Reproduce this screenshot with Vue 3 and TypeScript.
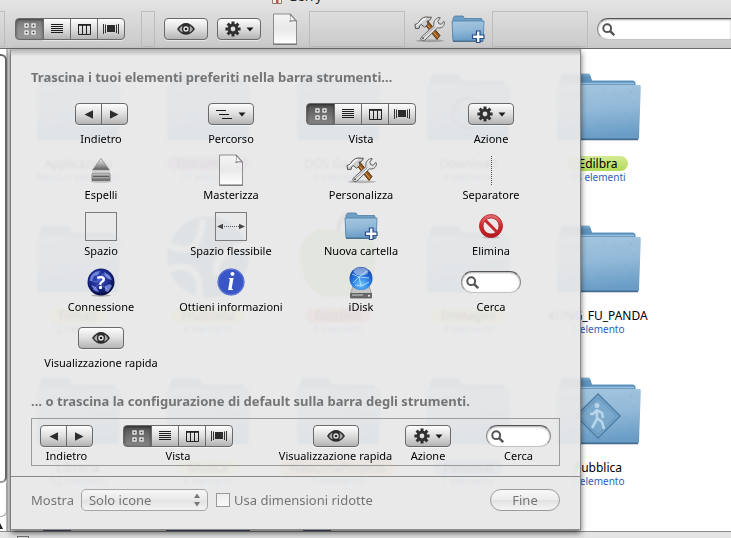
<script setup lang="ts">
import { h, type FunctionalComponent } from 'vue'

type Kind =
  | 'nav' | 'path' | 'view' | 'action' | 'eject' | 'burn' | 'tools' | 'separator'
  | 'space' | 'flex' | 'newfolder' | 'delete' | 'connect' | 'info' | 'idisk' | 'search' | 'look'

interface Item { kind: Kind; label: string }
interface Entry { name: string; info: string; tag?: string; art?: string }

const icon = (name: string, w: number, ht: number) =>
  h('svg', { class: 'ico', width: w, height: ht, 'aria-hidden': 'true' }, [h('use', { href: `#${name}` })])

const btn = (label: string, cls: string, kids: unknown[]) =>
  h('button', { type: 'button', class: ['btn', cls], 'aria-label': label }, kids as never)

/* One toolbar control, drawn the same way in the toolbar, the palette and the default set. */
const Control: FunctionalComponent<{ kind: Kind }> = ({ kind }) => {
  switch (kind) {
    case 'nav':
      return h('span', { class: 'group' }, [
        btn('Indietro', 'half', [icon('i-prev', 9, 9)]),
        btn('Avanti', 'half', [icon('i-next', 9, 9)]),
      ])
    case 'view':
      return h('span', { class: 'group' }, [
        btn('Icone', 'seg on', [icon('i-grid', 12, 12)]),
        btn('Elenco', 'seg', [icon('i-list', 12, 10)]),
        btn('Colonne', 'seg', [icon('i-cols', 13, 11)]),
        btn('Cover Flow', 'seg', [icon('i-flow', 16, 10)]),
      ])
    case 'path': return btn('Percorso', 'wide', [icon('i-path', 17, 11), icon('i-down', 8, 5)])
    case 'action': return btn('Azione', 'wide', [icon('i-gear', 16, 16), icon('i-down', 8, 5)])
    case 'look': return btn('Visualizzazione rapida', 'eye', [icon('i-eye', 18, 12)])
    case 'eject': return icon('i-eject', 22, 26)
    case 'burn': return icon('i-page', 26, 32)
    case 'tools': return icon('i-tools', 31, 28)
    case 'separator': return h('span', { class: 'dots' })
    case 'space': return h('span', { class: 'space' })
    case 'flex': return h('span', { class: 'space' }, [icon('i-flex', 30, 9)])
    case 'newfolder': return icon('i-newfolder', 34, 28)
    case 'delete': return icon('i-delete', 24, 25)
    case 'connect': return icon('i-connect', 28, 29)
    case 'info': return icon('i-info', 28, 28)
    case 'idisk': return icon('i-idisk', 24, 33)
    case 'search':
      return h('span', { class: 'search' }, [
        icon('i-lens', 13, 13),
        h('input', { type: 'search', 'aria-label': 'Cerca' }),
      ])
  }
}
Control.props = ['kind']

const palette: Item[] = [
  { kind: 'nav', label: 'Indietro' },
  { kind: 'path', label: 'Percorso' },
  { kind: 'view', label: 'Vista' },
  { kind: 'action', label: 'Azione' },
  { kind: 'eject', label: 'Espelli' },
  { kind: 'burn', label: 'Masterizza' },
  { kind: 'tools', label: 'Personalizza' },
  { kind: 'separator', label: 'Separatore' },
  { kind: 'space', label: 'Spazio' },
  { kind: 'flex', label: 'Spazio flessibile' },
  { kind: 'newfolder', label: 'Nuova cartella' },
  { kind: 'delete', label: 'Elimina' },
  { kind: 'connect', label: 'Connessione' },
  { kind: 'info', label: 'Ottieni informazioni' },
  { kind: 'idisk', label: 'iDisk' },
  { kind: 'search', label: 'Cerca' },
  { kind: 'look', label: 'Visualizzazione rapida' },
]

const defaults: Item[] = [
  { kind: 'nav', label: 'Indietro' },
  { kind: 'view', label: 'Vista' },
  { kind: 'look', label: 'Visualizzazione rapida' },
  { kind: 'action', label: 'Azione' },
  { kind: 'search', label: 'Cerca' },
]

const entries: Entry[] = [
  { name: 'Applicazioni', info: 'Nessun elemento' },
  { name: 'Documenti', info: '11 elementi', tag: 'purple' },
  { name: 'DOS Games', info: '6 elementi' },
  { name: 'Download', info: '6 elementi', art: 'drop' },
  { name: 'Edilbra', info: '18 elementi', tag: 'green' },
  { name: 'Filmati', info: '12 elementi', tag: 'yellow' },
  { name: 'Frustrella', info: '4 elementi', tag: 'yellow', art: 'globe' },
  { name: 'Giochini', info: '9 elementi', tag: 'red', art: 'apple' },
  { name: 'Immagini', info: '8 elementi', tag: 'yellow' },
  { name: 'KUNG_FU_PANDA', info: '1 elemento' },
  { name: 'Libreria', info: '52 elementi' },
  { name: 'Musica', info: '4 elementi', tag: 'yellow' },
  { name: 'NeoLunaProjects', info: '1 elemento', tag: 'orange' },
  { name: 'Personal', info: '1 elemento', tag: 'blue' },
  { name: 'Pubblica', info: '1 elemento', art: 'walk' },
]
</script>

<template>
  <div class="window">
    <svg class="defs" width="0" height="0" aria-hidden="true">
      <defs>
        <linearGradient id="g-folder" x1="0" y1="0" x2="0.15" y2="1">
          <stop offset="0" stop-color="#a5c6df" /><stop offset="0.5" stop-color="#92b9d8" /><stop offset="1" stop-color="#6a9dc6" />
        </linearGradient>
        <linearGradient id="g-back" x1="0" y1="0" x2="0" y2="1">
          <stop offset="0" stop-color="#86b0d0" /><stop offset="0.2" stop-color="#5f94bf" /><stop offset="1" stop-color="#5c90ba" />
        </linearGradient>
        <linearGradient id="g-page" x1="0" y1="0" x2="0" y2="1">
          <stop offset="0" stop-color="#f4f4f4" /><stop offset="0.5" stop-color="#e9e9e9" /><stop offset="1" stop-color="#fff" />
        </linearGradient>
        <linearGradient id="g-metal" x1="0" y1="0" x2="0" y2="1">
          <stop offset="0" stop-color="#f8f8f8" /><stop offset="1" stop-color="#5a5a5a" />
        </linearGradient>
        <linearGradient id="g-red" x1="0" y1="0" x2="0" y2="1">
          <stop offset="0" stop-color="#e8747a" /><stop offset="0.5" stop-color="#cf2a30" /><stop offset="1" stop-color="#b8161c" />
        </linearGradient>
        <radialGradient id="g-globe" cx="0.5" cy="0.75" r="0.75">
          <stop offset="0" stop-color="#6fc8ff" /><stop offset="0.5" stop-color="#2a7be0" /><stop offset="1" stop-color="#0b3aa4" />
        </radialGradient>
        <radialGradient id="g-night" cx="0.45" cy="0.4" r="0.6">
          <stop offset="0" stop-color="#3c56c8" /><stop offset="0.6" stop-color="#1a2a8c" /><stop offset="1" stop-color="#060a3c" />
        </radialGradient>
      </defs>

      <symbol id="i-prev" viewBox="0 0 9 9"><path d="M9 0.3v8.4L0.5 4.5z" fill="#2c2c2c" /></symbol>
      <symbol id="i-next" viewBox="0 0 9 9"><path d="M0 0.3v8.4l8.5-4.2z" fill="#2c2c2c" /></symbol>
      <symbol id="i-down" viewBox="0 0 8 5"><path d="M0.5 0.5h7L4 4.5z" fill="#1c1c1c" /></symbol>
      <symbol id="i-grid" viewBox="0 0 12 12">
        <g fill="#333" stroke="#fff" stroke-width="1.2">
          <rect x="1" y="1" width="3" height="3" /><rect x="8" y="1" width="3" height="3" />
          <rect x="1" y="8" width="3" height="3" /><rect x="8" y="8" width="3" height="3" />
        </g>
      </symbol>
      <symbol id="i-list" viewBox="0 0 12 10">
        <path d="M0 .5h12M0 2.500h12M0 4.500h12M0 6.500h12M0 8.500h12" stroke="#1e1e1e" stroke-width="1" />
      </symbol>
      <symbol id="i-cols" viewBox="0 0 13 11">
        <path d="M.5 1h12v9.500H.5zM4.500 1v9.500M8.500 1v9.500" fill="none" stroke="#222" />
        <path d="M0 .8h13" stroke="#222" stroke-width="1.6" />
      </symbol>
      <symbol id="i-flow" viewBox="0 0 16 10">
        <rect x="4" y="1" width="8" height="7" fill="#2c2c2c" />
        <path d="M.5 0v10M2.500 .5v8.500M13.500 .5v8.500M15.500 0v10" stroke="#333" />
      </symbol>
      <symbol id="i-path" viewBox="0 0 17 11">
        <path d="M0 1.500h10M3 5.500h10M6 9.500h10" stroke="#1a1a1a" stroke-width="1" />
      </symbol>
      <symbol id="i-eye" viewBox="0 0 18 12">
        <path d="M0 6C3 1.800 6 0 9 0s6 1.800 9 6c-3 4.200-6 5.800-9 5.800S3 10.200 0 6z" fill="#2b2b2b" />
        <path d="M2 6.200C3.400 4 4.600 3 5.600 2.600 4.700 4.600 4.800 7.600 6 9.600 4.400 9 3.200 8 2 6.200zM16 6.200c-1.400-2.200-2.600-3.200-3.600-3.600.9 2 .8 5-.4 7 1.600-.6 2.800-1.600 4-3.400z" fill="#a9a9a9" />
        <circle cx="9" cy="6" r="2.700" fill="#e6e6e6" /><circle cx="9" cy="6" r="1.300" fill="#222" />
      </symbol>
      <symbol id="i-gear" viewBox="0 0 16 16">
        <g stroke="#303030" stroke-width="3" fill="none">
          <path d="M8 .4v3.600M8 12v3.600M.4 8H4M12 8h3.600M2.600 2.600l2.600 2.600M10.800 10.800l2.600 2.600M13.400 2.600l-2.600 2.600M5.200 10.800l-2.600 2.600" />
          <circle cx="8" cy="8" r="3.900" />
        </g>
      </symbol>
      <symbol id="i-lens" viewBox="0 0 13 13">
        <circle cx="5.200" cy="5.200" r="3.900" fill="none" stroke="#555" stroke-width="2" />
        <path d="M8.200 8.200l4 4" stroke="#555" stroke-width="2.400" />
      </symbol>
      <symbol id="i-flex" viewBox="0 0 30 9">
        <path d="M6 4.500h18" stroke="#555" stroke-dasharray="1 1" />
        <path d="M1 4.500l6-2.800v5.600zM29 4.500l-6-2.800v5.600z" fill="#484848" />
      </symbol>
      <symbol id="i-eject" viewBox="0 0 22 26">
        <ellipse cx="11" cy="24.500" rx="10.500" ry="1.300" fill="#000" opacity=".18" />
        <path d="M11 1.500L19.500 13h-17z" fill="url(#g-metal)" stroke="#8a8a8a" stroke-width=".8" />
        <path d="M2 14.500h18V24H2z" fill="#c4c4c4" />
        <path d="M2 17h18v6.500H2z" fill="url(#g-metal)" stroke="#6e6e6e" stroke-width=".8" />
        <path d="M3 18.500h16v1.500H3z" fill="#5d5d5d" />
      </symbol>
      <symbol id="i-page" viewBox="0 0 26 32">
        <path d="M1.500 1h17l6 7v23h-23z" fill="url(#g-page)" stroke="#8d8d8d" />
        <path d="M1 31.300h24" stroke="#666" stroke-width=".9" />
        <path d="M18 1c1 2.500.8 5-.2 7.600 2.300-.9 4.500-1 6.700-.4z" fill="#c9c9c9" stroke="#777" stroke-width=".9" />
        <path d="M18.600 2.800c.3 1.500.2 3-.2 4.400 1.200-.3 2.400-.3 3.600-.2z" fill="#fff" />
      </symbol>
      <symbol id="i-tools" viewBox="0 0 31 28">
        <ellipse cx="16" cy="25.800" rx="14" ry="1.400" fill="#000" opacity=".22" />
        <path d="M9.500 7.500l3-3L26 20.500l-3 4z" fill="#9a5a1e" stroke="#4a2608" stroke-width=".9" />
        <path d="M11.500 8l12.500 14.500" stroke="#d79a50" stroke-width="1" />
        <path d="M1.500 13.500L1 9.500l3.500-1.300C5.500 5 8.500 2.300 12 2l5.500.3-2 3.200-2.500.7 1 3-3.500 3-3.200-2.700-1.800 1.500-.3 2.300z" fill="#cfcfcf" stroke="#444" stroke-width=".9" />
        <path d="M2.500 10.500L7 7c1-2 3-3.500 5-3.700" stroke="#fff" stroke-width="1.200" fill="none" />
        <path d="M7 22.500L20 10.500c-.8-3.500.8-7 5-8l1.300.2-2.500 3.500 1 2.500 2.500.6 2.500-3 .7 1.500c-.3 3.800-3.500 5.800-7 5L11 25c-1.500 1.300-5.500 0-4-2.500z" fill="#e2e2e2" stroke="#555" stroke-width=".9" />
        <path d="M9.500 22.500l12-11" stroke="#999" stroke-width="1" />
        <circle cx="9" cy="23.300" r="1" fill="#555" />
      </symbol>
      <symbol id="i-newfolder" viewBox="0 0 34 28">
        <path d="M2 3.500L3.500 1h8.500l1.500 2.500h17l1 3v17H2z" fill="#6f9fc5" stroke="#4f7ea6" stroke-width=".8" />
        <path d="M1 6h32l-.8 20H2z" fill="url(#g-folder)" stroke="#4f7fa8" stroke-width=".8" />
        <path d="M2 26.300h30" stroke="#3c5f80" />
        <path d="M25.500 16h3.500v4h4v3.500h-4v4h-3.500v-4h-4V20h4z" fill="#fff" stroke="#2b4a8a" stroke-width="1.200" />
      </symbol>
      <symbol id="i-delete" viewBox="0 0 24 25">
        <ellipse cx="12" cy="23.300" rx="9" ry="1.200" fill="#000" opacity=".15" />
        <circle cx="12" cy="12" r="11.500" fill="url(#g-red)" stroke="#a82024" stroke-width=".8" />
        <circle cx="12" cy="12" r="8" fill="#eee6e6" stroke="#a01418" stroke-width=".7" />
        <path d="M6.300 6.300l11.400 11.400" stroke="#c8242a" stroke-width="3" />
      </symbol>
      <symbol id="i-connect" viewBox="0 0 28 29">
        <ellipse cx="14" cy="27.500" rx="10" ry="1.200" fill="#000" opacity=".25" />
        <circle cx="14" cy="14" r="13.500" fill="url(#g-night)" />
        <path d="M4 8c3-4 6-5 9-5l-2 4-4 1-2 5-2-1zM17 4l5 3 3 5-4-1-3-3zM4 17l5 2 3 5-4-1zM18 18l5-2 2 2-4 6-3-1z" fill="#8c9ff0" opacity=".75" />
        <path d="M2 12l8 2 6-8 8 4M6 22l6-6 10 6" stroke="#b6c4ff" stroke-width=".5" fill="none" opacity=".7" />
        <text x="14" y="20.500" text-anchor="middle" font-family="'Noto Sans', sans-serif" font-weight="bold" font-size="18" fill="#fff">?</text>
      </symbol>
      <symbol id="i-info" viewBox="0 0 28 28">
        <circle cx="14" cy="14" r="13.500" fill="#3a55c6" />
        <circle cx="14" cy="14" r="12.800" fill="none" stroke="#6d84df" stroke-width=".8" />
        <text x="14" y="21.500" text-anchor="middle" font-family="'Liberation Serif', serif" font-weight="bold" font-style="italic" font-size="25" fill="#fff">i</text>
      </symbol>
      <symbol id="i-idisk" viewBox="0 0 24 33">
        <path d="M4 20h16l2.500 8h-21z" fill="#c6c6c6" stroke="#8c8c8c" stroke-width=".7" />
        <path d="M1.500 27.500h21v4.500h-21z" fill="#6a6a6a" stroke="#4a4a4a" stroke-width=".7" />
        <path d="M3 29h11" stroke="#ccc" stroke-width="1" /><circle cx="20" cy="29.700" r="1" fill="#eee" />
        <circle cx="12" cy="12.500" r="11.500" fill="url(#g-globe)" />
        <path d="M3 8l7 3 8-6M10 11l2 9 8-4M4 17l6-6 10 1M12 20l-6-1" stroke="#d5efff" stroke-width=".7" fill="none" />
        <ellipse cx="12" cy="5.500" rx="7.500" ry="4" fill="#fff" opacity=".45" />
      </symbol>
      <symbol id="i-folder" viewBox="0 0 86 68">
        <path d="M3 14L6 2.500Q7 .5 9 .5h24q2 0 2.500 2L37 7.500h41q2 0 2.500 2.500V20H3z" fill="url(#g-back)" />
        <path d="M5 10.500h74" stroke="#9cc0dc" stroke-width="1.500" />
        <path d="M1 14q0-2 2-2h81q2 0 1.800 2L84 65q-.2 2-2 2H4q-2 0-2-2z" fill="url(#g-folder)" />
        <path d="M3 66.300h80" stroke="#44698c" stroke-width="1.800" />
        <g fill="#5f8fb8" opacity=".55">
          <circle cx="48" cy="18" r=".6" /><circle cx="61" cy="22" r=".5" /><circle cx="76" cy="19" r=".6" /><circle cx="54" cy="34" r=".5" />
          <circle cx="70" cy="40" r=".6" /><circle cx="77" cy="50" r=".6" /><circle cx="45" cy="52" r=".6" /><circle cx="66" cy="56" r=".5" />
          <circle cx="50" cy="60" r=".6" /><circle cx="79" cy="30" r=".6" />
        </g>
      </symbol>
    </svg>

    <header class="toolbar">
      <div class="title">
        <svg width="12" height="12" viewBox="0 0 12 12" aria-hidden="true">
          <path d="M1.500 5v6.500h9V5L6 1z" fill="#f3ede6" stroke="#8a8078" /><path d="M5 7h2.500v4.500H5z" fill="#b4574c" />
        </svg>
        <span>Gerry</span>
      </div>
      <div class="bar">
        <span class="gap edge"></span>
        <span class="view-slot"><Control kind="view" /></span>
        <span class="gap small"></span>
        <Control kind="look" />
        <Control kind="action" />
        <span class="slot"><Control kind="burn" /></span>
        <span class="gap"></span>
        <span class="slot"><Control kind="tools" /></span>
        <span class="slot"><Control kind="newfolder" /></span>
        <span class="gap"></span>
        <div class="find"><Control kind="search" /></div>
      </div>
    </header>

    <div class="body">
      <aside class="rail">
        <div class="thumb"></div>
        <div class="cap"></div>
        <svg width="6" height="8" viewBox="0 0 6 8" aria-hidden="true"><path d="M0 0l3 6H0z" fill="#222" /></svg>
      </aside>

      <main class="files">
        <ul class="icons">
          <li v-for="e in entries" :key="e.name">
            <svg class="art" width="86" height="68" viewBox="0 0 86 68" aria-hidden="true">
              <template v-if="e.art === 'globe'">
                <circle cx="43" cy="32" r="41" fill="#5b8fb5" />
                <path d="M4 20q30 16 34-26M82 20q-36 8-30 30M4 44q34-10 30 28" fill="none" stroke="#fff" stroke-width="6" />
              </template>
              <template v-else-if="e.art === 'apple'">
                <path d="M43 8c14-10 38-3 38 24S60 80 43 70C26 80 5 59 5 32S29-2 43 8z" fill="#8fc45a" />
                <path d="M43 8q0-14 10-20" stroke="#555" stroke-width="4" fill="none" />
              </template>
              <template v-else>
                <use href="#i-folder" width="86" height="68" />
                <g v-if="e.art === 'walk'" stroke="#4c7fa9" fill="none">
                  <path d="M43 17l22 22-22 22-22-22z" fill="#7ba9cb" stroke-width="1.500" />
                  <path d="M43 20.500L61.500 39 43 57.500 24.500 39z" stroke="#608fb8" />
                  <circle cx="42" cy="28.500" r="2.500" fill="#b9d5ea" stroke="none" />
                  <path d="M42 32v10l-5 9M42 41l5 4 2 7M42 33l-4 4-3 0M42 33l5 3 1 5" stroke="#b9d5ea" stroke-width="2.600" />
                </g>
                <circle v-if="e.art === 'drop'" cx="43" cy="40" r="15" fill="none" stroke="#4c7fa9" stroke-width="3" />
              </template>
            </svg>
            <span class="name" :class="e.tag">{{ e.name }}</span>
            <span class="info">{{ e.info }}</span>
          </li>
          <li v-for="n in 3" :key="n" class="peek" :class="{ full: n === 2 }"></li>
        </ul>
      </main>

      <form class="sheet" @submit.prevent>
        <section class="choose">
          <h2>Trascina i tuoi elementi preferiti nella barra strumenti…</h2>
          <div class="palette">
            <div v-for="i in palette" :key="i.label" class="item">
              <span class="pic"><Control :kind="i.kind" /></span>
              <span class="cap-text">{{ i.label }}</span>
            </div>
          </div>
          <h2>… o trascina la configurazione di default sulla barra degli strumenti.</h2>
          <div class="defaults">
            <div v-for="i in defaults" :key="i.label" class="item" :class="{ roomy: i.kind === 'look' }">
              <Control :kind="i.kind" />
              <span class="cap-text">{{ i.label }}</span>
            </div>
          </div>
        </section>
        <footer class="foot">
          <label for="show">Mostra</label>
          <span class="pick">
            <select id="show">
              <option>Solo icone</option>
              <option>Icone e testo</option>
              <option>Solo testo</option>
            </select>
            <svg width="8" height="14" viewBox="0 0 8 14" aria-hidden="true"><path d="M1 5l3-4.500L7 5zM1 9l3 4.500L7 9z" fill="#777" /></svg>
          </span>
          <input id="small" type="checkbox" />
          <label for="small">Usa dimensioni ridotte</label>
          <button type="submit" class="done">Fine</button>
        </footer>
      </form>
    </div>

    <div class="status"><i></i><span>5 elementi, 12 GB disponibili</span></div>
  </div>
</template>

<style>
body {
  background: #fff;
}
.ico {
  display: block;
  flex: none;
  overflow: visible;
}
.group {
  display: inline-flex;
}
.btn {
  display: inline-flex;
  align-items: center;
  justify-content: center;
  gap: 5px;
  box-sizing: border-box;
  height: 22px;
  margin: 0;
  padding: 0;
  border: 1px solid #6a6a6a;
  border-radius: 4px;
  background: linear-gradient(#fdfdfd, #dedede 50%, #b4b4b4);
  box-shadow: 0 1px 0 rgba(255, 255, 255, 0.5);
}
.btn.half { width: 27px; }
.btn.seg { width: 28px; }
.btn.seg.on { width: 29px; }
.btn.wide { width: 46px; }
.btn.eye { width: 46px; }
.group .btn + .btn { margin-left: -1px; }
.group .btn:not(:first-child) {
  border-top-left-radius: 0;
  border-bottom-left-radius: 0;
}
.group .btn:not(:last-child) {
  border-top-right-radius: 0;
  border-bottom-right-radius: 0;
}
.btn.on {
  background: linear-gradient(#505050, #6e6e6e 50%, #858585);
  box-shadow: inset 0 1px 3px rgba(0, 0, 0, 0.5);
}
.dots {
  height: 29px;
  border-left: 1px dotted #555;
}
.space {
  display: flex;
  align-items: center;
  justify-content: center;
  box-sizing: border-box;
  width: 32px;
  height: 29px;
  border: 1px solid #7c7c7c;
}
.search {
  display: flex;
  align-items: center;
  gap: 2px;
  box-sizing: border-box;
  width: 60px;
  height: 22px;
  padding: 0 6px 0 4px;
  border: 1px solid #8c8c8c;
  border-top-color: #555;
  border-bottom-color: #c4c4c4;
  border-radius: 11px;
  background: #fff;
  box-shadow: inset 0 1px 2px rgba(0, 0, 0, 0.35);
}
.search input {
  flex: 1;
  min-width: 0;
  padding: 0;
  border: 0;
  outline: 0;
  background: transparent;
}
</style>

<style scoped>
.window {
  display: flex;
  flex-direction: column;
  height: 100vh;
  overflow: hidden;
  font-family: "Noto Sans", "Open Sans", sans-serif;
  color: #000;
}
.defs {
  position: absolute;
}
.toolbar {
  flex: none;
  border-bottom: 1px solid #6c6c6c;
  background: linear-gradient(#e4e4e4, #c9c9c9);
}
.title {
  display: flex;
  align-items: flex-end;
  justify-content: center;
  gap: 5px;
  height: 4px;
  margin-right: 138px;
  overflow: hidden;
  font-size: 13px;
  line-height: 16px;
  color: #222;
}
.bar {
  display: flex;
  align-items: center;
  gap: 9px;
  padding: 7px 0 1px;
}
.bar :deep(.btn.eye),
.bar :deep(.btn.wide) {
  width: 44px;
}
.bar :deep(.btn.on) {
  background: linear-gradient(#787878, #8e8e8e 50%, #999);
}
.gap {
  flex: 1;
  box-sizing: border-box;
  height: 36px;
  border: 1px solid #bcbcbc;
}
.gap.edge {
  flex: none;
  width: 5px;
  border-left: 0;
}
.gap.small {
  flex: none;
  width: 14px;
}
.view-slot {
  flex: none;
  width: 117px;
  padding-left: 1px;
}
.view-slot :deep(.group) {
  display: flex;
}
.slot {
  display: flex;
  justify-content: center;
  width: 30px;
}
.find {
  width: 134px;
}
.find :deep(.search) {
  width: 100%;
  border-right: 0;
  border-radius: 11px 0 0 11px;
}
.body {
  position: relative;
  display: flex;
  flex: 1;
  min-height: 0;
}
.rail {
  display: flex;
  flex-direction: column;
  flex: none;
  box-sizing: border-box;
  width: 11px;
  border-right: 1px solid #a8a8a8;
  background: linear-gradient(90deg, #fff 6px, #888 7px, #d8d8d8 8px, #d8d8d8);
}
.thumb,
.cap {
  box-sizing: border-box;
  width: 7px;
  border: solid #6a6a6a;
  border-width: 2px 2px 0 0;
  border-top-right-radius: 6px;
  background: #fff;
}
.thumb {
  flex: 1;
  margin-top: 5px;
  border-bottom: 2px solid #999;
  border-bottom-right-radius: 6px;
}
.cap {
  height: 34px;
  margin-bottom: 6px;
  border-width: 0 1px 1px 0;
  border-color: #aaa;
  border-radius: 0 0 6px 0;
}
.files {
  flex: 1;
  overflow: hidden;
  background: #fff;
}
.icons {
  display: grid;
  grid-template-columns: repeat(auto-fill, 130px);
  grid-auto-rows: 152px;
  margin: 0;
  padding: 24px 0 0 2px;
  list-style: none;
}
.icons li {
  display: flex;
  flex-direction: column;
  align-items: center;
}
.icons .peek {
  width: 28px;
  height: 30px;
  margin-left: 30px;
  background: #5a678a;
}
.icons .peek.full {
  width: 84px;
  margin-left: 23px;
}
.art {
  flex: none;
  margin-bottom: 15px;
  overflow: visible;
}
.name {
  padding: 0 10px;
  border-radius: 8px;
  font-size: 12px;
  line-height: 15px;
}
.info {
  font-size: 10px;
  line-height: 13px;
  color: #2f62b5;
}
.green { background: linear-gradient(#d3ea94, #b4dc55); }
.yellow { background: #f1e27a; }
.purple { background: #d3a9dd; }
.red { background: #f08a80; }
.orange { background: #f7bd72; }
.blue { background: #93b6ee; }
.sheet {
  position: absolute;
  top: 0;
  left: 11px;
  display: flex;
  flex-direction: column;
  box-sizing: border-box;
  width: 570px;
  max-width: calc(100% - 11px);
  margin: 0;
  border: solid #8a8a8a;
  border-width: 0 1px 1px 0;
  background: linear-gradient(rgba(120, 120, 120, 0.5), rgba(232, 232, 232, 0) 7px), rgba(232, 232, 232, 0.94);
  backdrop-filter: blur(1px);
  box-shadow: 0 3px 6px rgba(0, 0, 0, 0.6);
}
.choose {
  padding: 19px 20px 10px;
}
h2 {
  margin: 0;
  font-size: 13px;
  font-weight: bold;
  line-height: 18px;
  color: #757575;
}
.palette {
  display: grid;
  grid-template-columns: repeat(4, 130px);
  row-gap: 6px;
  margin: 11px 0 21px 5px;
}
.item {
  display: flex;
  flex-direction: column;
  align-items: center;
}
.pic {
  display: flex;
  align-items: center;
  justify-content: center;
  height: 34px;
}
.cap-text {
  font-size: 11px;
  line-height: 16px;
  white-space: nowrap;
}
.defaults {
  display: grid;
  grid-template-columns: 83px 152px 130px 81px 65px;
  justify-items: start;
  margin-top: 8px;
  padding: 6px 0 1px 8px;
  border: 1px solid #9c9c9c;
}
.defaults .item {
  gap: 1px;
}
.defaults .roomy {
  min-width: 121px;
}
.defaults :deep(.search) {
  width: 65px;
}
.foot {
  display: flex;
  align-items: center;
  padding: 12px 20px 18px;
  border-top: 1px solid #8a8a8a;
  font-size: 13px;
  line-height: 18px;
  color: #757575;
}
.pick {
  position: relative;
  display: flex;
  align-items: center;
  width: 127px;
  margin: 0 8px 0 7px;
}
.pick svg {
  position: absolute;
  right: 7px;
  pointer-events: none;
}
.pick select {
  appearance: none;
  box-sizing: border-box;
  width: 100%;
  height: 22px;
  margin: 0;
  padding: 0 24px 0 7px;
  border: 1px solid #a6a6a6;
  border-radius: 5px;
  background: linear-gradient(#f6f6f6, #e9e9e9 50%, #e2e2e2 51%, #f2f2f2);
  font: inherit;
  color: #757575;
}
.foot input {
  appearance: none;
  box-sizing: border-box;
  width: 14px;
  height: 14px;
  margin: 0 4px 0 0;
  border: 1px solid #9a9a9a;
  background: linear-gradient(#eee, #f8f8f8);
}
.done {
  box-sizing: border-box;
  width: 70px;
  height: 22px;
  margin: 0 0 0 auto;
  padding: 0;
  border: 1px solid #9c9c9c;
  border-radius: 11px;
  background: linear-gradient(#f8f8f8, #ececec 50%, #e2e2e2 51%, #f4f4f4);
  font: inherit;
  color: #757575;
}
.status {
  display: flex;
  flex: none;
  gap: 55px;
  box-sizing: border-box;
  height: 7px;
  padding: 4px 0 0 17px;
  overflow: hidden;
  border-top: 1px solid #8c8c8c;
  background: #e4e4e4;
  font-size: 11px;
  line-height: 11px;
}
.status i {
  width: 10px;
  height: 10px;
  border: 1px solid #777;
}
</style>
